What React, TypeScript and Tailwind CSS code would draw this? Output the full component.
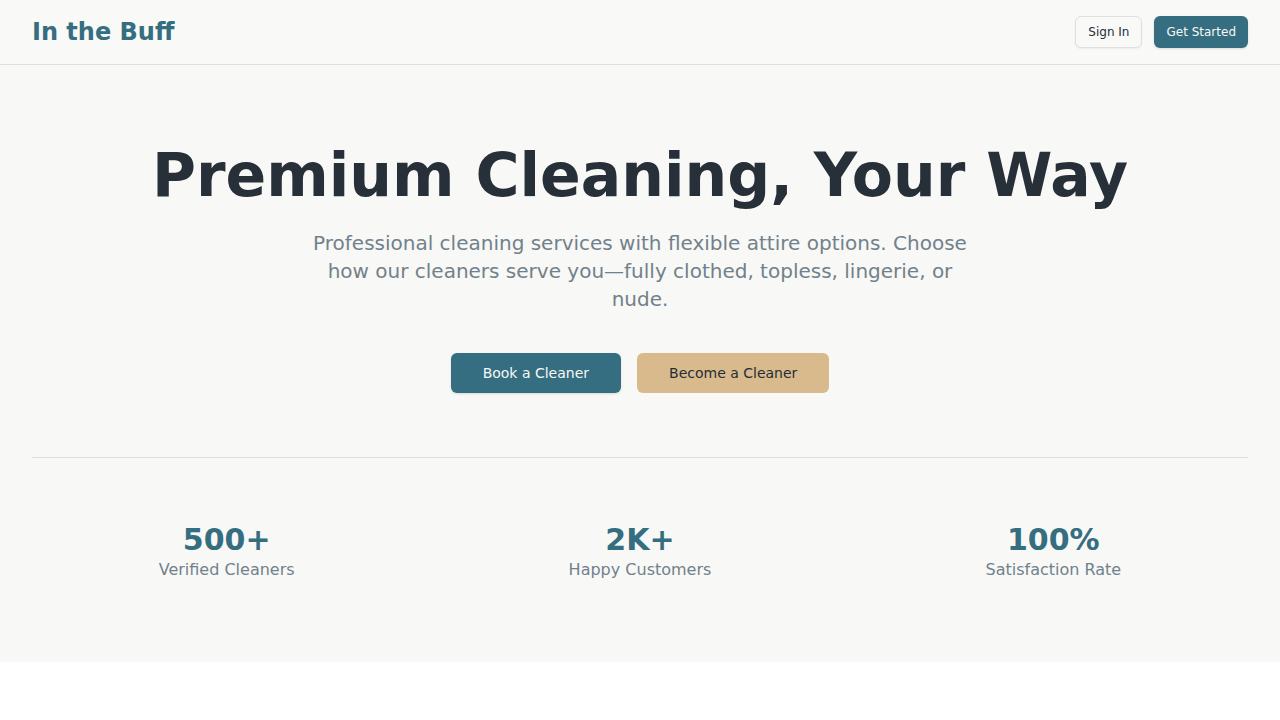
import React from 'react';

const stats = [
  { value: '500+', label: 'Verified Cleaners' },
  { value: '2K+', label: 'Happy Customers' },
  { value: '100%', label: 'Satisfaction Rate' },
];

const Header = () => {
  return (
    <header className="border-b border-[#dfe0dd] bg-[#f9f9f7]">
      <div className="max-w-7xl mx-auto px-8 py-4 flex items-center justify-between">
        <span className="text-2xl font-bold text-[#346e80]">In the Buff</span>
        <div className="flex items-center gap-3">
          <button
            type="button"
            className="h-8 px-3 rounded-md border border-[#dfe0dd] bg-[#f9f9f7] text-xs font-medium text-[#1f2d38] shadow-xs hover:bg-gray-100"
          >
            Sign In
          </button>
          <button
            type="button"
            className="h-8 px-3 rounded-md bg-[#346e80] text-xs font-medium text-[#f8f8f6] shadow-sm hover:bg-[#2b5f70]"
          >
            Get Started
          </button>
        </div>
      </div>
    </header>
  );
};

const Hero = () => {
  return (
    <section className="max-w-7xl mx-auto px-8 py-20">
      <div className="text-center">
        <h1 className="text-6xl font-bold text-[#272f38] mb-6">Premium Cleaning, Your Way</h1>
        <p className="text-xl text-[#71818b] max-w-2xl mx-auto mb-10">
          Professional cleaning services with flexible attire options. Choose how our cleaners serve
          you—fully clothed, topless, lingerie, or nude.
        </p>
        <div className="flex justify-center gap-4">
          <button
            type="button"
            className="h-10 px-8 rounded-md bg-[#346e80] text-sm font-medium text-[#f8f8f6] shadow-sm hover:bg-[#2b5f70]"
          >
            Book a Cleaner
          </button>
          <button
            type="button"
            className="h-10 px-8 rounded-md bg-[#d9ba8c] text-sm font-medium text-[#1f2d38] hover:bg-[#cfae7d]"
          >
            Become a Cleaner
          </button>
        </div>
      </div>

      {/* Stats */}
      <div className="mt-16 pt-16 border-t border-[#dfe0dd] grid grid-cols-3 gap-6 text-center">
        {stats.map((stat) => (
          <div key={stat.label}>
            <div className="text-3xl font-bold text-[#346e80]">{stat.value}</div>
            <div className="text-[#71818b]">{stat.label}</div>
          </div>
        ))}
      </div>
    </section>
  );
};

const App = () => {
  return (
    <div className="bg-[#f8f8f6] font-['DejaVu_Sans',sans-serif]">
      <Header />
      <Hero />
    </div>
  );
};

export default App;
